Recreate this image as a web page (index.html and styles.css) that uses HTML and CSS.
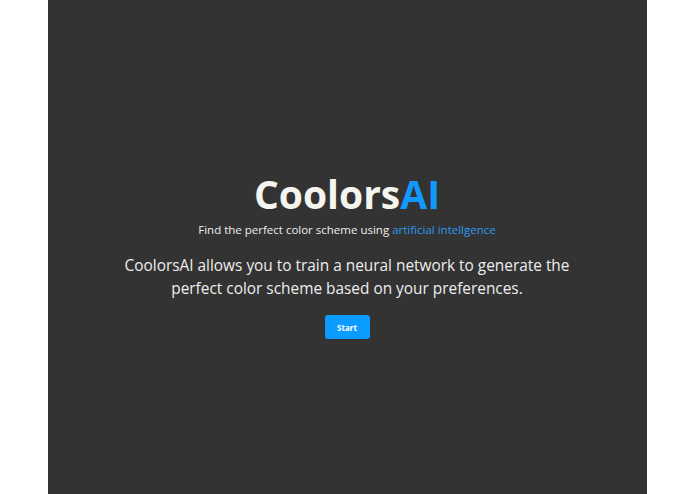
FILE: index.html
```html
<!DOCTYPE html>
<html>
<head>
<meta charset="utf-8">
<link rel="stylesheet" href="styles.css">
</head>
<body>
<main class="panel">
  <section class="hero">
    <h1 class="title">Coolors<span class="accent">AI</span></h1>
    <p class="subtitle">Find the perfect color scheme using <span class="link">artificial intellgence</span></p>
    <p class="lead">CoolorsAI allows you to train a neural network to generate the perfect color scheme based on your preferences.</p>
    <button class="btn">Start</button>
  </section>
</main>
</body>
</html>
```
FILE: styles.css
```css
html, body {
  margin: 0;
  padding: 0;
  height: 100%;
  background: #ffffff;
}
body {
  display: flex;
  justify-content: center;
  font-family: "Open Sans", "Noto Sans", sans-serif;
}
.panel {
  box-sizing: border-box;
  width: 599px;
  margin-left: -1px;
  height: 494px;
  padding-top: 172px;
  background: #333333;
  display: flex;
  align-items: flex-start;
  justify-content: center;
}
.hero {
  display: flex;
  flex-direction: column;
  align-items: center;
  text-align: center;
  color: #f2f2f2;
}
.title {
  margin: 0;
  font-size: 39px;
  font-weight: 700;
  line-height: 44px;
  color: #f5f5f0;
  letter-spacing: 0;
}
.accent { color: #1199ff; }
.subtitle {
  margin: 6px 0 0;
  font-size: 11.5px;
  line-height: 16px;
  color: #eeeeee;
}
.link { color: #2a9af0; }
.lead {
  margin: 16px 0 0;
  width: 470px;
  font-size: 15.4px;
  line-height: 23px;
  color: #eeeeee;
}
.btn {
  margin-top: 15px;
  width: 45px;
  height: 24px;
  border: none;
  border-radius: 3px;
  background: #0a9cff;
  color: #ffffff;
  font-family: inherit;
  font-weight: 700;
  font-size: 8px;
  padding: 0;
}
```
